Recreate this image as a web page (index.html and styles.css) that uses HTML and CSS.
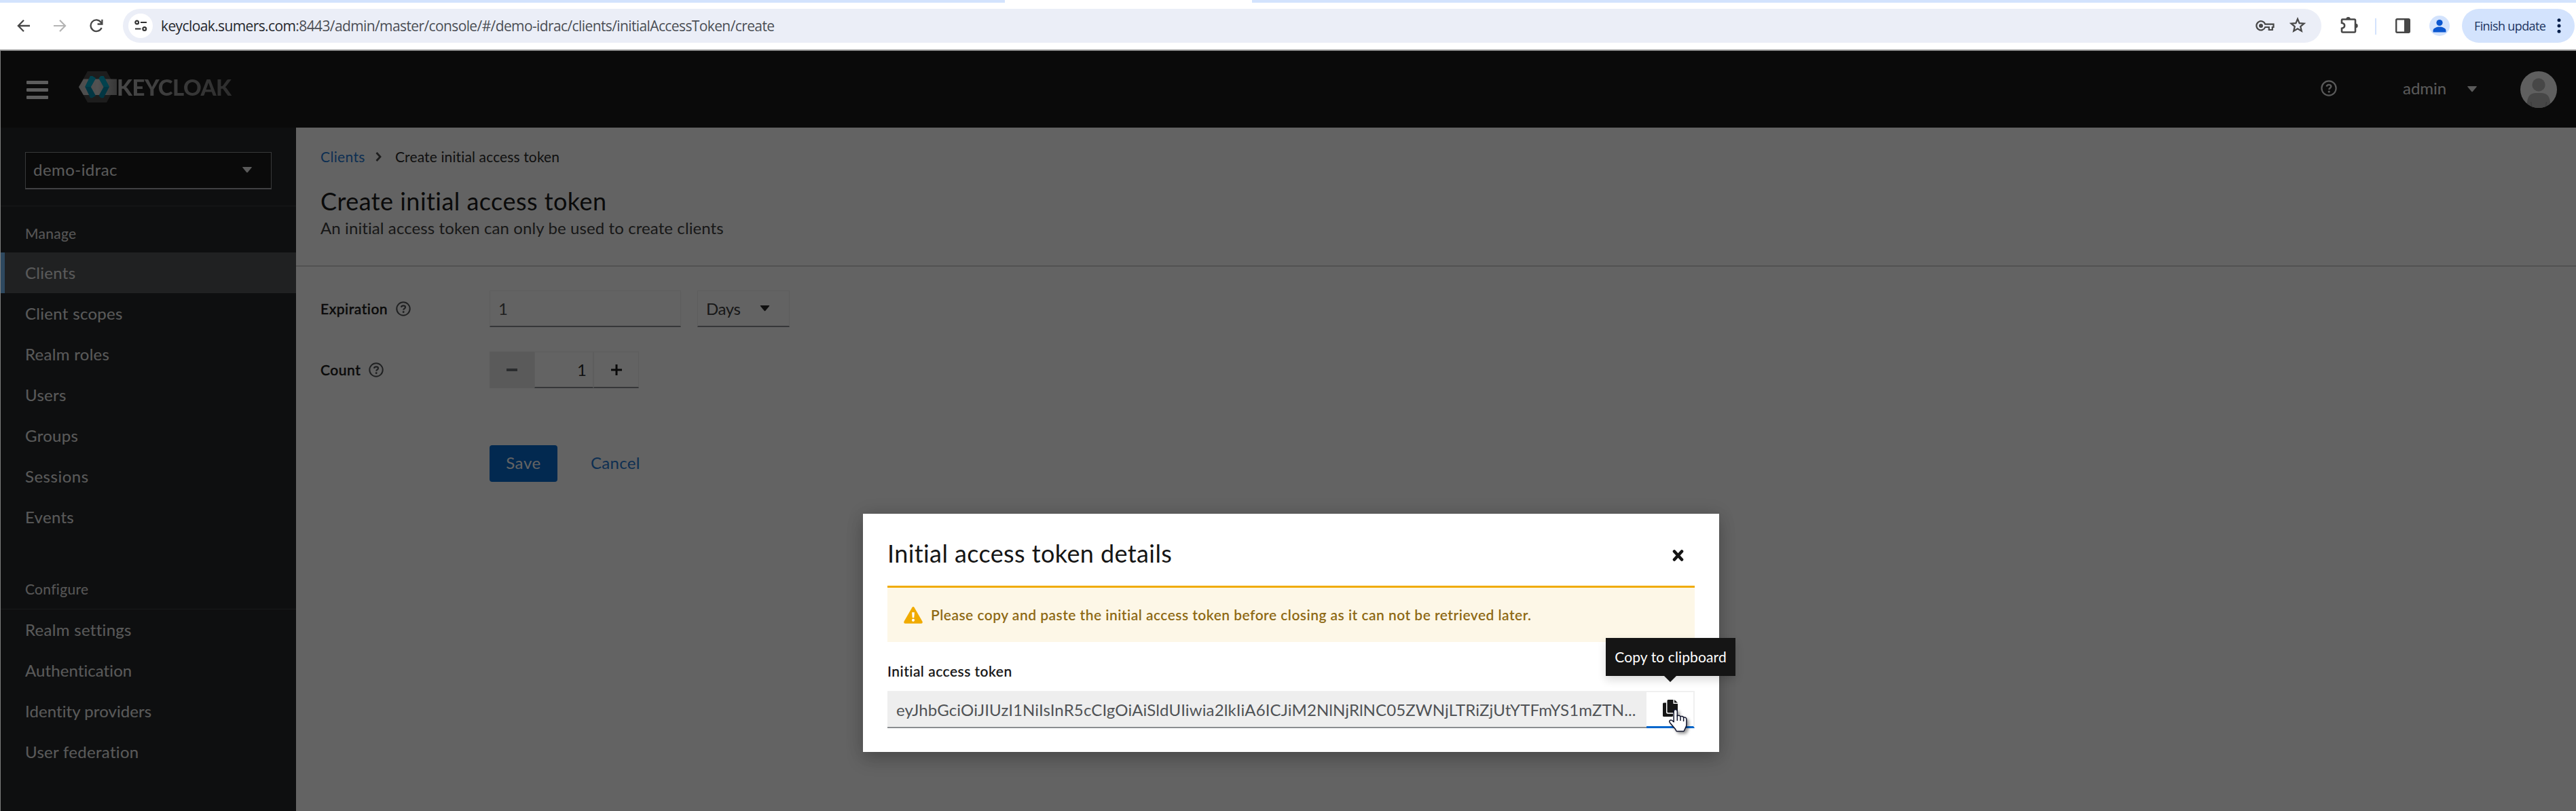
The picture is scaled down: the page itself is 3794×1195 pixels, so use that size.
FILE: index.html
```html
<!DOCTYPE html>
<html lang="en">
<head>
<meta charset="utf-8">
<title>Keycloak Administration Console</title>
<link rel="stylesheet" href="styles.css">
</head>
<body>
<svg width="0" height="0" class="defs">
  <symbol id="help" viewBox="0 0 24 24">
    <circle cx="12" cy="12" r="10.6" fill="none" stroke="currentColor" stroke-width="2.2"/>
    <path d="M8.600 9.500C9 7.700 10.300 6.900 12 6.900c1.900 0 3.300 1 3.300 2.600 0 2.100-3 2.300-3 4.400" fill="none" stroke="currentColor" stroke-width="2.400"/>
    <circle cx="12.200" cy="17.100" r="1.600" fill="currentColor"/>
  </symbol>
  <symbol id="caret" viewBox="0 0 14 9"><path d="M0.700 0h12.600q.9.300.3 1.100L7.800 7.900q-.8.700-1.600 0L.4 1.100Q-.2.300.7 0z" fill="currentColor"/></symbol>
</svg>

<div class="tabstrip"><div class="active-tab"></div></div>
<div class="toolbar">
  <svg class="tb-back" width="20" height="20" viewBox="0 0 20 20" fill="none" stroke="#474747" stroke-width="2.300"><path d="M19 10H2.500M10 1.800L1.900 10l8.100 8.200"/></svg>
  <svg class="tb-fwd" width="20" height="20" viewBox="0 0 20 20" fill="none" stroke="#b4b4b4" stroke-width="2.200"><path d="M1 10h16.500M10 1.800L18.100 10 10 18.200"/></svg>
  <svg class="tb-reload" width="20" height="20" viewBox="0 0 20 20" fill="none" stroke="#474747" stroke-width="2.300"><path d="M17.600 12.800A8.300 8.300 0 1 1 16.700 5L18 7"/><path d="M18.400 .8v6.700h-6.800"/></svg>
  <div class="omnibox">
    <div class="site-chip"><svg width="19" height="18" viewBox="0 0 19 18" fill="none" stroke="#333" stroke-width="2.200"><circle cx="3.700" cy="4" r="2.400"/><path d="M9 4h9M1 13.500h8.500"/><circle cx="14.800" cy="13.500" r="2.400"/></svg></div>
    <span class="url"><b>keycloak.sumers.com</b>:8443/admin/master/console/#/demo-idrac/clients/initialAccessToken/create</span>
    <svg class="tb-key" width="28" height="16" viewBox="0 0 28 16" fill="none" stroke="#474747" stroke-width="2.200"><path d="M14.200 5.700H26.500v4.300h-1.700v4h-5v-4h-5.600A6.600 6.600 0 1 1 14.200 5.700z"/><circle cx="8" cy="8" r="3" fill="#474747" stroke="none"/></svg>
    <svg class="tb-star" width="24" height="24" viewBox="0 0 24 24" fill="none" stroke="#474747" stroke-width="2.200"><path d="M12 2.900l2.600 6.200 6.800.6-5.200 4.400 1.600 6.600-5.800-3.500-5.800 3.500 1.600-6.600L2.600 9.700l6.800-.6z"/></svg>
  </div>
  <svg class="tb-ext" width="26" height="26" viewBox="0 0 26 26" fill="none" stroke="#474747" stroke-width="2.600"><path d="M3 4.500h17.500q1.500 0 1.500 1.500v16q0 1.500-1.500 1.500h-17q-1.500 0-1.500-1.500v-4.200c5.500-1 5.500-7 0-8V5.500q0-1 1-1z"/><path d="M8.400 4.200a3.200 3.200 0 0 1 6.400 0zM22.500 10.800a3.200 3.200 0 0 1 0 6.400z" fill="#474747" stroke="none"/></svg>
  <i class="tb-sep"></i>
  <svg class="tb-panel" width="22" height="22" viewBox="0 0 22 22"><rect x="1.200" y="1.200" width="19.600" height="19.600" rx="1.500" fill="none" stroke="#474747" stroke-width="2.400"/><path d="M13 1h8v20h-8z" fill="#474747"/></svg>
  <svg class="tb-profile" width="30" height="30" viewBox="0 0 30 30"><circle cx="15" cy="15" r="15" fill="#d3e3fd"/><circle cx="15" cy="10.500" r="4.600" fill="#0b57d0"/><path d="M5.500 24.500v-2.500c0-3.500 5.500-5.400 9.500-5.400s9.500 1.900 9.500 5.400v2.500z" fill="#0b57d0"/></svg>
  <div class="update"><span>Finish update</span><svg width="6" height="22" viewBox="0 0 6 22" fill="#041e49"><circle cx="3" cy="2.700" r="2.500"/><circle cx="3" cy="11" r="2.500"/><circle cx="3" cy="19.300" r="2.500"/></svg></div>
</div>

<div class="app">
  <header class="masthead">
    <div class="burger"><i></i><i></i><i></i></div>
    <svg class="logo" width="56" height="46" viewBox="0 0 56 46">
      <defs><linearGradient id="lg"><stop offset="0" stop-color="#c4c4c4"/><stop offset=".5" stop-color="#d2d2d2"/><stop offset="1" stop-color="#8c8c8c"/></linearGradient></defs>
      <path d="M13 0h28l13 23-13 23H13L0 23z" fill="#484848"/>
      <path d="M7 11.500h49v23.500H7L0 23.200z" fill="url(#lg)"/>
      <path d="M20 7l5 3.200-7.200 12.800L25 36l-5 3.200h-3L9.300 23 17 7z" fill="#008aaa"/>
      <path d="M20 7l5 3.200-7.200 12.800H9.300L17 7z" fill="#00a8c8"/>
      <path d="M32.500 7h4L45 23l-8.500 16.200h-4L29.500 36l7.200-13-7.200-12.800z" fill="#008aaa"/>
      <path d="M32.500 7h4L45 23h-8.300l-7.200-12.800z" fill="#00a8c8"/>
    </svg>
    <span class="wordmark">KEYCLOAK</span>
    <svg class="mast-help" width="24" height="24"><use href="#help"/></svg>
    <span class="user">admin</span>
    <svg class="user-caret" width="14" height="9"><use href="#caret"/></svg>
    <svg class="avatar" width="54" height="54" viewBox="0 0 54 54"><defs><clipPath id="av"><circle cx="27" cy="27" r="27"/></clipPath></defs><g clip-path="url(#av)"><path fill="#f5f5f5" d="M0 0h54v54H0z"/><circle cx="27" cy="20" r="9.700" fill="#b5b5b5"/><path d="M10 54V46q1-14 13-14h8q12 0 13 14v8z" fill="#b5b5b5"/><path d="M17 54l-1.500-9M37 54l1.500-9" stroke="#9c9c9c" stroke-width="1.500"/></g></svg>
  </header>
  <div class="body">
    <nav class="sidebar">
      <div class="realm"><div class="realm-select"><span>demo-idrac</span><svg width="14" height="9"><use href="#caret"/></svg></div></div>
      <h2 class="nav-title manage">Manage</h2>
      <ul class="nav">
        <li class="current">Clients</li><li>Client scopes</li><li>Realm roles</li><li>Users</li><li>Groups</li><li class="wide">Sessions</li><li>Events</li>
      </ul>
      <h2 class="nav-title configure">Configure</h2>
      <ul class="nav">
        <li>Realm settings</li><li class="tight">Authentication</li><li class="tight">Identity providers</li><li>User federation</li>
      </ul>
    </nav>
    <main class="main">
      <section class="head">
        <div class="crumbs"><a>Clients</a><svg width="9" height="14" viewBox="0 0 9 14" fill="none" stroke="#4a4a4a" stroke-width="2.800"><path d="M1.500 1l5.500 6-5.500 6"/></svg><span>Create initial access token</span></div>
        <h1>Create initial access token</h1>
        <p>An initial access token can only be used to create clients</p>
      </section>
      <form class="form">
        <div class="row">
          <div class="label">Expiration<svg width="22" height="22"><use href="#help"/></svg></div>
          <div class="field expiry">1</div>
          <div class="field unit"><span>Days</span><svg width="15" height="9"><use href="#caret"/></svg></div>
        </div>
        <div class="row">
          <div class="label">Count<svg width="22" height="22"><use href="#help"/></svg></div>
          <div class="stepper">
            <div class="minus"><i></i></div><div class="field value">1</div>
            <div class="field plus"><svg width="16" height="16" viewBox="0 0 16 16" stroke="#151515" stroke-width="3"><path d="M0 8h16M8 0v16"/></svg></div>
          </div>
        </div>
        <div class="actions"><div class="save">Save</div><div class="cancel">Cancel</div></div>
      </form>
    </main>
  </div>
  <div class="backdrop"></div>
</div>

<div class="modal">
  <div class="modal-head"><h2>Initial access token details</h2><svg width="17" height="17" viewBox="0 0 17 17" stroke="#151515" stroke-width="4.600" stroke-linecap="round"><path d="M3 2.500l11 12M14 2.500L3 14.500"/></svg></div>
  <div class="alert">
    <svg width="28" height="25" viewBox="0 0 28 25"><path d="M12.300 1.200q1.700-2.400 3.400 0l11.700 20.400q1.200 2.800-1.500 3.200H2.100q-2.700-.4-1.500-3.200z" fill="#f0ab00"/><path d="M12.100 8.200h3.800l-.6 8h-2.600z" fill="#fff"/><circle cx="14" cy="19.800" r="2.100" fill="#fff"/></svg>
    <span>Please copy and paste the initial access token before closing as it can not be retrieved later.</span>
  </div>
  <div class="token-label">Initial access token</div>
  <div class="copy-row">
    <div class="token">eyJhbGciOiJIUzI1NiIsInR5cCIgOiAiSldUIiwia2lkIiA6ICJiM2NlNjRlNC05ZWNjLTRiZjUtYTFmYS1mZTN...</div>
    <div class="copy">
      <svg width="22" height="25" viewBox="0 0 22 25" fill="#151515"><path d="M0 6q0-1.500 1.500-1.500H5v14q0 2.300 2.300 2.300H15v2.700q0 1.500-1.500 1.500h-12Q0 25 0 23.500z"/><path d="M6.500 1.500Q6.500 0 8 0h7.500v6H22v12q0 1.300-1.500 1.300H8q-1.500 0-1.500-1.300z"/><path d="M17 0l5 4.600h-5z"/></svg>
    </div>
  </div>
</div>
<div class="tooltip">Copy to clipboard</div>
<svg class="cursor" width="34" height="40" viewBox="0 0 34 40"><path d="M10.500 2.500c2.100 0 2.800 1 2.800 2.500v7c1-1.300 4.200-1 4.700 1 1.300-1 4.200-.6 4.600 1.300 2-.7 4.300.2 4.300 2.600v8c0 2.500-1.800 4.500-2.500 7l-1.400 2.600H12.200l-2-3.600-8-9.400c-1.500-2 1-4.600 3.300-3l2.700 2.300V5c0-1.500.7-2.500 2.300-2.500z" fill="#fff" stroke="#10142c" stroke-width="1.500" stroke-linejoin="round"/><path d="M13.300 11v8M18 13.500V19M22.600 15v5" stroke="#10142c" stroke-width="1.500" fill="none"/></svg>
</body>
</html>
```
FILE: styles.css
```css
* { box-sizing: border-box; }
body { margin: 0; width: 3794px; height: 1195px; overflow: hidden; position: relative; background: #fff; font-family: Lato, "Liberation Sans", sans-serif; font-size: 24px; line-height: 36px; letter-spacing: .2px; color: #151515; }
h1, h2, p, ul { margin: 0; padding: 0; font-weight: 400; list-style: none; }
svg { display: block; flex: none; }
.defs { position: absolute; }

/* Browser chrome */
.tabstrip { height: 4px; background: #d3e3fd; padding-left: 1480px; }
.active-tab { width: 364px; height: 4px; background: #fff; }
.toolbar { height: 71px; padding: 9px 2px 0 25px; display: flex; align-items: flex-start; border-bottom: 2px solid #8b8b8b; background: #fff; border-top-left-radius: 10px; }
.toolbar > svg { margin-top: 15px; }
.tb-fwd { margin-left: 33px; }
.tb-reload { margin-left: 34px; }
.omnibox { width: 3238px; height: 50px; margin-left: 29px; padding-left: 8px; border-radius: 25px; background: #ebeef7; display: flex; align-items: center; }
.site-chip { width: 36px; height: 36px; border-radius: 50%; background: #fff; display: flex; align-items: center; justify-content: center; }
.url { flex: 1; margin: 0 0 0 12px; font: 21px/50px "Open Sans", sans-serif; letter-spacing: -.61px; color: #4b4e55; white-space: nowrap; }
.url b { font-weight: 400; color: #26282e; }
.tb-key { margin-right: 22px; }
.tb-star { margin-right: 23px; margin-top: -2px; }
.toolbar > .tb-ext { margin: 11px 0 0 28px; }
.tb-sep { width: 2px; height: 24px; margin: 14px 0 0 25px; background: #d3e3fd; }
.toolbar > .tb-panel { margin: 14px 0 0 28px; }
.toolbar > .tb-profile { margin: 10px 0 0 28px; }
.update { width: 166px; height: 50px; margin-left: 18px; padding: 0 20px 0 18px; border-radius: 25px; background: #d3e3fd; display: flex; align-items: center; justify-content: space-between; font: 18px/50px "Open Sans", sans-serif; letter-spacing: -.62px; color: #1c3460; white-space: nowrap; }

/* Console */
.app { position: relative; height: 1120px; border-left: 1px solid #7d7d7d; }
.backdrop { position: absolute; inset: 0; background: rgba(3, 3, 3, .62); }
.masthead { height: 113px; padding: 0 28px 0 38px; background: #151515; display: flex; align-items: center; color: #e8e8e8; }
.burger { width: 32px; display: grid; gap: 6px; margin-top: 1px; }
.burger i { height: 5px; border-radius: 1px; background: #f0f0f0; }
.logo { margin: -7px 0 0 45px; }
.wordmark { flex: 1; margin: -8px 0 0 0; font-size: 33px; font-weight: 900; letter-spacing: -.5px; background: linear-gradient(90deg, #b8b8b8, #707070 175px); -webkit-background-clip: text; background-clip: text; color: transparent; }
.mast-help { margin-top: -3px; }
.user { width: 65px; margin: -3px 0 0 97px; letter-spacing: 0; }
.user-caret { margin: 0 0 0 30px; }
.avatar { margin: 1px 0 0 64px; }
.body { display: flex; height: 1007px; }
.sidebar { width: 435px; background: #212427; color: #e8e8e8; }
.realm { height: 116px; padding: 36px 36px 0; border-bottom: 1px solid #3c3f42; }
.realm-select { height: 55px; padding: 0 28px 2px 11px; border: 1px solid #8f9194; border-bottom: 2px solid #a5a7aa; background: #151515; display: flex; align-items: center; justify-content: space-between; letter-spacing: .45px; }
.nav-title { font-size: 21px; padding-left: 36px; color: #e0e0e0; letter-spacing: .3px; }
.manage { height: 68px; padding-top: 22px; }
.configure { height: 106px; padding-top: 58px; border-bottom: 1px solid #3c3f42; }
.nav li { height: 60px; padding: 12px 36px; letter-spacing: .3px; }
.nav .wide { letter-spacing: .5px; }
.nav .tight { letter-spacing: .08px; }
.nav .current { background: #4f5255; border-left: 6px solid #73bcf7; padding-left: 30px; }

.main { flex: 1; background: #fff; color: #262626; }
.head { height: 205px; padding: 25px 36px 0; border-bottom: 2px solid #d2d2d2; }
.crumbs { display: flex; align-items: center; font-size: 21px; letter-spacing: .13px; }
.crumbs a { color: #2176d2; width: 81px; letter-spacing: .35px; }
.crumbs span { margin-left: 20px; }
h1 { margin-top: 20px; font-size: 36px; line-height: 54px; letter-spacing: .46px; color: #151515; }
.head p { margin-top: -5px; letter-spacing: .1px; color: #3a3a3a; }
.form { padding: 35px 36px 0; }
.row { display: flex; height: 54px; margin-bottom: 36px; }
.label { width: 249px; display: flex; align-items: center; gap: 12px; font-size: 21px; font-weight: 500; letter-spacing: .52px; color: #151515; -webkit-text-stroke: .4px; }
.label svg { color: #4f5255; }
.field { height: 54px; border: 1px solid #f0f0f0; border-bottom: 2px solid #8a8d90; display: flex; align-items: center; }
.expiry { width: 282px; padding-left: 12px; color: #4a4a4a; }
.unit { width: 136px; margin-left: 24px; padding: 0 28px 0 12px; justify-content: space-between; letter-spacing: -.4px; }
.unit span { color: #3a3a3a; }
.stepper { display: flex; }
.minus { width: 66px; background: #e6e6e6; display: grid; place-items: center; }
.minus i { width: 16px; height: 4px; background: #6a6e73; }
.value { width: 87px; padding-right: 9px; justify-content: flex-end; }
.plus { width: 67px; justify-content: center; }
.actions { display: flex; margin: 84px 0 0 249px; line-height: 51px; }
.save { width: 100px; height: 54px; border-radius: 4px; background: #06c; color: #fff; text-align: center; letter-spacing: .6px; }
.cancel { margin-left: 49px; color: #2176d2; letter-spacing: .3px; }

/* Dialog */
.modal { position: absolute; left: 1271px; top: 757px; width: 1261px; height: 351px; padding: 30px 36px 0; background: #fff; box-shadow: 0 12px 24px rgba(3, 3, 3, .18), 0 0 24px rgba(3, 3, 3, .12); }
.modal-head { display: flex; justify-content: space-between; height: 76px; padding-right: 16px; }
.modal-head h2 { font-size: 36px; line-height: 57px; letter-spacing: .4px; }
.modal-head svg { margin-top: 23px; }
.alert { height: 83px; border-top: 3px solid #f0ab00; background: #fdf7e7; padding: 0 0 0 24px; display: flex; align-items: center; gap: 12px; font-size: 21px; font-weight: 600; letter-spacing: .47px; color: #8f6a15; white-space: nowrap; }
.token-label { height: 72px; padding-top: 25px; font-size: 21px; font-weight: 500; letter-spacing: .5px; -webkit-text-stroke: .2px; }
.copy-row { display: flex; height: 55px; }
.token { flex: 1; padding: 0 12px 0 13px; border-top: 1px solid #f0f0f0; border-bottom: 2px solid #8a8d90; background: #eee; line-height: 53px; letter-spacing: .13px; color: #505356; white-space: nowrap; overflow: hidden; }
.copy { width: 71px; border: 2px solid #f0f0f0; border-left: 0; border-bottom: 3px solid #06c; padding: 11px 0 0 24px; }
.tooltip { position: absolute; left: 2365px; top: 940px; width: 191px; height: 56px; background: #151515; color: #fff; font-size: 21px; line-height: 55px; text-align: center; letter-spacing: .12px; box-shadow: 0 6px 12px rgba(3, 3, 3, .14); }
.tooltip::after { content: ""; position: absolute; left: 86px; top: 56px; border: 9px solid transparent; border-top-color: #151515; border-bottom: 0; }
.cursor { position: absolute; left: 2457px; top: 1043px; filter: drop-shadow(3px 3px 2px rgba(0, 0, 0, .4)); }
```
